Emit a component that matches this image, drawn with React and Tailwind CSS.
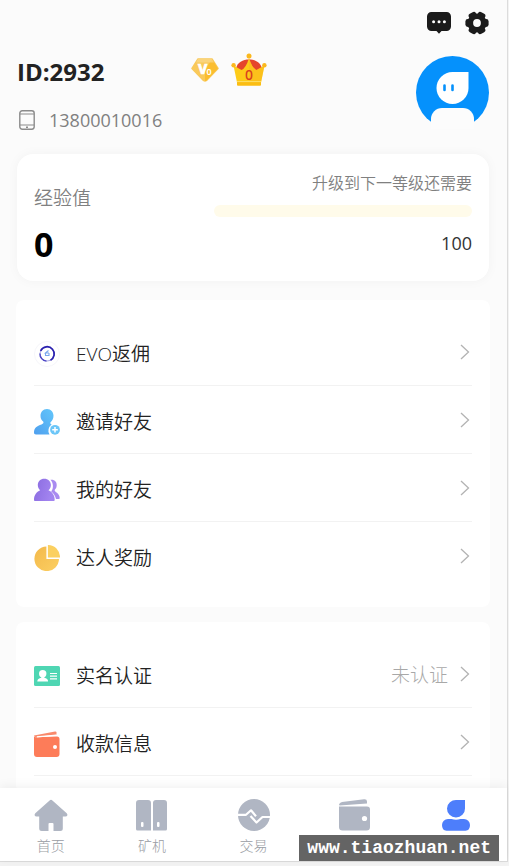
import clsx from "clsx";

function MessageIcon() {
  return (
    <svg viewBox="0 0 24 22" className="h-[22px] w-6" aria-hidden="true">
      <path
        fill="#1b1b1b"
        d="M4.5 0h15A4.4 4.4 0 0 1 24 4.400v10.200a4.400 4.400 0 0 1-4.500 4.400h-5L12 21.800 9.500 19h-5A4.400 4.400 0 0 1 0 14.600V4.400A4.400 4.400 0 0 1 4.500 0Z"
      />
      <circle cx="6.600" cy="9.800" r="1.500" fill="#fff" />
      <circle cx="12" cy="9.800" r="1.500" fill="#fff" />
      <circle cx="17.400" cy="9.800" r="1.500" fill="#fff" />
    </svg>
  );
}

function GearIcon() {
  return (
    <svg viewBox="0 0 24 24" className="size-6" aria-hidden="true">
      <g fill="#1b1b1b">
        <circle cx="12" cy="12" r="9.600" />
        {[30, 90, 150, 210, 270, 330].map((angle) => (
          <rect key={angle} x="8" y="0.400" width="8" height="7" rx="2.400" transform={`rotate(${angle} 12 12)`} />
        ))}
      </g>
      <circle cx="12" cy="12" r="3.900" fill="#fbfbfb" />
    </svg>
  );
}

function GemBadge() {
  return (
    <svg viewBox="0 0 28 24" className="h-6 w-7" role="img" aria-label="V0">
      <path d="M7 1h14l6 9.500L15.500 22.500q-1.500 1.200-3 0L1 10.500Z" fill="#f9c95a" stroke="#f9c95a" strokeWidth="1.500" strokeLinejoin="round" />
      <path d="M14 12 21 1l6 9.500L15.500 22.500q-.800.600-1.500.600Z" fill="#fbb612" opacity="0.600" />
      <path d="M7 1h14l2 3.500H5Z" fill="#fbd98a" opacity="0.700" />
      <text x="7" y="16" fill="#fff" stroke="#fff" strokeWidth="0.600" fontSize="14" fontWeight="800" fontFamily="Noto Sans, sans-serif">V</text>
      <text x="15.500" y="16.500" fill="#fff" fontSize="9" fontWeight="600" fontFamily="Noto Sans, sans-serif">0</text>
    </svg>
  );
}

function CrownBadge() {
  return (
    <svg viewBox="0 0 36 34" className="h-[34px] w-9" role="img" aria-label="0">
      <path d="M5 16C6 9 12 6.500 18 6.500S30 9 31 16l-4 6H9Z" fill="#e5462b" />
      <path d="M2.500 12.500 10.500 17Q15 15 18 5q3 10 7.500 12l8-4.500-3.500 17H6Z" fill="#fdcb18" />
      <path d="M18 5q3 10 7.500 12l8-4.500-3.500 17H18Z" fill="#fbb81d" opacity="0.500" />
      <path d="M6 28.500h24V32q0 .800-1 .800H7q-1 0-1-.800Z" fill="#fbbd12" />
      <path d="M6 28.600h24" stroke="#fde06a" />
      <circle cx="18" cy="3" r="2.500" fill="#fbb81d" />
      <circle cx="2.600" cy="12.300" r="2.200" fill="#fbb81d" />
      <circle cx="33.400" cy="12.300" r="2.200" fill="#fbb81d" />
      <text x="18" y="26.500" textAnchor="middle" fill="#d9401f" fontSize="14" fontWeight="500" fontFamily="Noto Sans, sans-serif">0</text>
    </svg>
  );
}

function Avatar() {
  return (
    <svg viewBox="0 0 73 73" className="size-[73px]" role="img" aria-label="头像">
      <clipPath id="avatar-circle">
        <circle cx="36.500" cy="36.500" r="36.500" />
      </clipPath>
      <g clipPath="url(#avatar-circle)">
        <rect width="73" height="73" fill="#0591fc" />
        <path d="M36.500 16H52.500V32A16 16 0 1 1 36.500 16Z" fill="#fff" />
      </g>
      <path d="M15 73V63a11 11 0 0 1 11-11H47a11 11 0 0 1 11 11V73Z" fill="#fcfcfc" />
      <path d="M28.500 29.500v4.500M36.500 29.500v4.500" stroke="#0591fc" strokeWidth="2.600" strokeLinecap="round" />
    </svg>
  );
}

function PhoneIcon() {
  return (
    <svg viewBox="0 0 16 20" className="h-5 w-4" fill="none" stroke="#8b8b8b" strokeWidth="1.400" aria-hidden="true">
      <rect x="0.800" y="0.800" width="14.400" height="18.400" rx="2.400" />
      <path d="M1 4h14M1 15h14" strokeWidth="1.100" />
      <path d="M7 17.200h2" />
    </svg>
  );
}

function ChevronIcon() {
  return (
    <svg viewBox="0 0 10 16" className="h-4 w-[10px]" fill="none" stroke="#b3b3b3" strokeWidth="1.300" aria-hidden="true">
      <path d="M1 1l7.500 7L1 15" />
    </svg>
  );
}

function CoinIcon() {
  return (
    <svg viewBox="0 0 26 26" className="size-[26px]" fill="none" aria-hidden="true">
      <circle cx="13" cy="13" r="12.500" stroke="#f6f6fa" />
      <circle cx="13" cy="13" r="7" stroke="#a9a8e6" strokeWidth="1.200" />
      <path d="M6.600 9.800A7.200 7.200 0 0 1 18.500 8.200a7.200 7.200 0 0 1-2 11" stroke="#2a20ae" strokeWidth="1.700" />
      <path d="M6 12.500a7.200 7.200 0 0 0 6.500 7.700" stroke="#4b45c4" strokeWidth="1.300" />
      <path d="M14.500 9.500 11.500 12h3.500M11.500 12v2.500h3.500V12" stroke="#79a8ee" strokeWidth="1.100" />
    </svg>
  );
}

function InviteIcon() {
  return (
    <svg viewBox="0 0 26 26" className="size-[26px]" aria-hidden="true">
      <defs>
        <linearGradient id="invite-fill" x1="0" y1="1" x2="1" y2="0">
          <stop offset="0" stopColor="#4f9fee" />
          <stop offset="1" stopColor="#62c6fb" />
        </linearGradient>
      </defs>
      <path
        fill="url(#invite-fill)"
        d="M13 0c4 0 6.500 3 6.500 6.800 0 2.700-1.200 5-3 6.500-.500 1.200.200 2 1.300 2.400A7 7 0 0 0 15.500 25.500H2c-1.400 0-2-.800-2-2 0-4.500 3-6.600 7.500-8 1.800-.600 2.400-1.700 1.700-2.900C7.600 11.600 6.500 9.500 6.500 6.800 6.500 3 9 0 13 0Z"
      />
      <circle cx="21" cy="20.800" r="6" fill="#fff" />
      <circle cx="21" cy="20.800" r="4.900" fill="#6bc6f8" />
      <path d="M21 18v5.600M18.200 20.800h5.600" stroke="#fff" strokeWidth="1.500" />
    </svg>
  );
}

function FriendsIcon() {
  return (
    <svg viewBox="0 0 26 24" className="h-6 w-[26px]" aria-hidden="true">
      <defs>
        <linearGradient id="friends-fill" x1="0" y1="0" x2="1" y2="0.300">
          <stop offset="0" stopColor="#8a6be0" />
          <stop offset="1" stopColor="#a385f0" />
        </linearGradient>
      </defs>
      <path
        fill="#a98bf0"
        d="M16.500 1.800c4.200-.500 6.500 2.200 6.200 5.800-.100 1.800-.700 3.200-1.900 4.200-.400 1 .200 1.700 1.100 2.300 2.400 1.500 3.800 3.500 3.800 6 0 .700-.400 1-1 1h-2.700c-.700-3.600-2.400-6-4.800-7.700 1.200-1.500 1.800-3.500 1.700-6-.200-2.200-1-4.200-2.400-5.600Z"
      />
      <path
        fill="url(#friends-fill)"
        d="M10.300.800c3.800 0 6.600 2.700 6.600 6.300 0 2.100-.900 4-2.400 5.200 3.800 1.500 6.200 5 6.200 9.500 0 .800-.400 1.200-1.200 1.200H1.200C.400 23 0 22.600 0 21.800c0-4.500 2.400-8 6.200-9.500C4.700 11.100 3.800 9.200 3.800 7.100 3.800 3.500 6.500.800 10.300.800Z"
      />
    </svg>
  );
}

function PieIcon() {
  return (
    <svg viewBox="0 0 26 26" className="size-[26px]" aria-hidden="true">
      <defs>
        <linearGradient id="pie-fill" x1="0" y1="0" x2="1" y2="1">
          <stop offset="0" stopColor="#f3b94a" />
          <stop offset="1" stopColor="#fccf63" />
        </linearGradient>
      </defs>
      <path fill="url(#pie-fill)" d="M12.400 1.500v12.600H25A12.300 12.300 0 1 1 12.400 1.500Z" />
      <path fill="#fbd060" d="M13.900 0A12 12 0 0 1 26 12.600H13.900Z" />
    </svg>
  );
}

function IdCardIcon() {
  return (
    <svg viewBox="0 0 26 20" className="h-5 w-[26px]" aria-hidden="true">
      <rect width="26" height="20" rx="1.500" fill="#4fd6b3" />
      <circle cx="8.700" cy="7.800" r="3.700" fill="#fff" />
      <path d="M3.300 15.500c0-2.300 1.700-3.200 4-3.800V10h3v1.700c2.300.600 3.800 1.500 3.800 3.800Z" fill="#fff" />
      <path d="M16 7.500h7M16 10.200h7M16 12.900h7" stroke="#fff" strokeWidth="1.200" />
    </svg>
  );
}

function PayIcon() {
  return (
    <svg viewBox="0 0 26 26" className="size-[26px]" aria-hidden="true">
      <path fill="#f98a6c" d="M0 4.600 21 .400q1.500-.200 1.500 1.200V3.800L1 6Z" />
      <path fill="#fd7c59" d="M0 4.600Q0 6.500 2 6.300L23 5.600q2.500 0 2.500 2.600V23q0 3-3 3H3q-3 0-3-3Z" />
      <path d="M3 5.800 22.500 4.200" stroke="#fff" strokeWidth="1.300" />
      <circle cx="21" cy="16" r="2" fill="#fff" />
    </svg>
  );
}

function HomeTabIcon() {
  return (
    <svg viewBox="0 0 34 32" className="h-8 w-[34px]" aria-hidden="true">
      <path
        fill="currentColor"
        d="M15.600 1.400q1.400-1.200 2.800 0L32.700 14.300q1 1 .600 2.200-.400 1-1.800 1h-2.700v12q0 2.500-2.500 2.500h-6.800V25q0-1-1-1h-3q-1 0-1 1v7H7.700q-2.500 0-2.500-2.500v-12H2.500q-1.400 0-1.800-1-.400-1.200.600-2.200Z"
      />
    </svg>
  );
}

function MinerTabIcon() {
  return (
    <svg viewBox="0 0 34 32" className="h-8 w-[34px]" aria-hidden="true">
      <path fill="currentColor" d="M4 1h9q3 0 3 3v27.500H2.500Q1 31.500 1 30V4q0-3 3-3ZM21 1h8q3 0 3 3v26q0 1.500-1.500 1.500H18V4q0-3 3-3Z" />
      <rect x="6" y="23" width="2.500" height="5" rx="1" fill="#fff" />
      <rect x="22" y="23" width="2.500" height="5" rx="1" fill="#fff" />
    </svg>
  );
}

function TradeTabIcon() {
  return (
    <svg viewBox="0 0 34 32" className="h-8 w-[34px]" aria-hidden="true">
      <circle cx="17" cy="16" r="16" fill="currentColor" />
      <path d="M0 15.800h9L14 11.300l5 6" fill="none" stroke="#fff" strokeWidth="2.200" strokeLinejoin="round" />
      <path d="M13.500 17 19.500 23.500 25.500 18H34" fill="none" stroke="#fff" strokeWidth="2.200" strokeLinejoin="round" />
    </svg>
  );
}

function WalletTabIcon() {
  return (
    <svg viewBox="0 0 34 32" className="h-8 w-[34px]" aria-hidden="true">
      <path fill="currentColor" d="M1 5.500Q1.500 3.500 4 3L26 .300Q29 0 29 2.500V4.600L1.500 6.500Z" />
      <path fill="currentColor" d="M1 7.500H29q3 0 3 3V28q0 3.500-3.500 3.500h-24Q1 31.500 1 28Z" />
      <circle cx="26.500" cy="19.500" r="2.600" fill="#fff" />
    </svg>
  );
}

function MineTabIcon() {
  return (
    <svg viewBox="0 0 34 32" className="h-8 w-[34px]" aria-hidden="true">
      <path fill="currentColor" d="M17.500 1H26V9.500A9 8.700 0 1 1 17.500 1Z" />
      <path fill="currentColor" d="M9 20h3.500q4.500 1.500 9 0H25a6 6 0 0 1 6 6q0 5.700-4.500 5.700h-19Q3 31.700 3 26a6 6 0 0 1 6-6Z" />
    </svg>
  );
}

const rewardItems = [
  { label: "EVO返佣", Icon: CoinIcon },
  { label: "邀请好友", Icon: InviteIcon },
  { label: "我的好友", Icon: FriendsIcon },
  { label: "达人奖励", Icon: PieIcon },
];

const accountItems = [
  { label: "实名认证", Icon: IdCardIcon, status: "未认证" },
  { label: "收款信息", Icon: PayIcon },
];

const tabs = [
  { name: "首页", Icon: HomeTabIcon, label: "首页" },
  { name: "矿机", Icon: MinerTabIcon, label: "矿机" },
  { name: "交易", Icon: TradeTabIcon, label: "交易" },
  { name: "钱包", Icon: WalletTabIcon },
  { name: "我的", Icon: MineTabIcon, active: true },
];

function MenuRow({ label, Icon, status, divider }) {
  return (
    <a href="#" className={clsx("flex h-[68px] items-center border-b", divider ? "border-[#f2f2f2]" : "border-transparent")}>
      <span className="flex w-[26px] justify-center pt-1">
        <Icon />
      </span>
      <span className="ml-4 flex-1 pt-[6px] text-[19px] font-[350] text-[#222]">{label}</span>
      {status && <span className="mr-3 pt-1 text-[19px] text-[#a8a8a8]">{status}</span>}
      <span className="mr-[2px] pt-px">
        <ChevronIcon />
      </span>
    </a>
  );
}

// The last row of a complete group has no line under it.
function MenuCard({ items, openEnded }) {
  return (
    <section className="rounded-lg bg-white px-[18px] pt-[18px] pb-[17px]">
      {items.map((item, index) => (
        <MenuRow key={item.label} {...item} divider={openEnded || index < items.length - 1} />
      ))}
    </section>
  );
}

function App() {
  return (
    <div className="relative h-screen bg-[#f3f3f3] pr-px pb-1 font-['Open_Sans','Noto_Sans_CJK_SC',sans-serif] font-light">
      <div className="flex h-full flex-col border-r border-b border-[#dcdcdc] bg-[#fbfbfb]">
        <main className="min-h-0 flex-1 overflow-hidden pr-px">
          <header className="px-[17px] pt-[11px]">
            <div className="flex justify-end gap-[14px]">
              <button type="button" aria-label="消息">
                <MessageIcon />
              </button>
              <button type="button" aria-label="设置">
                <GearIcon />
              </button>
            </div>
            <div className="mt-[21px] flex items-start justify-between">
              <div>
                <div className="flex h-8 items-center">
                  <h1 className="w-[174px] text-2xl font-bold text-[#222]">ID:2932</h1>
                  <div className="flex items-center gap-3 pb-1">
                    <GemBadge />
                    <CrownBadge />
                  </div>
                </div>
                <p className="mt-[18px] flex h-7 items-center gap-[14px] pl-[2px] text-lg font-normal text-[#808080]">
                  <PhoneIcon />
                  13800010016
                </p>
              </div>
              <Avatar />
            </div>
          </header>

          <section className="mx-[17px] mt-5 flex justify-between rounded-2xl bg-white px-[17px] pt-[17px] pb-[19px] shadow-[0_0_12px_rgba(0,0,0,0.04)]">
            <div>
              <p className="mt-[13px] text-[19px] leading-7 font-[350] text-[#808080]">经验值</p>
              <p className="mt-[14px] text-[34px] leading-9 font-bold text-black">0</p>
            </div>
            <div className="w-[59%] text-right">
              <p className="text-base font-[350] text-[#808080]">升级到下一等级还需要</p>
              <div className="mt-[10px] h-3 rounded-full bg-[#fffbea]" />
              <p className="mt-3 text-lg leading-7 font-normal text-[#333]">100</p>
            </div>
          </section>

          <div className="mx-4 mt-[19px] space-y-[15px]">
            <MenuCard items={rewardItems} />
            <MenuCard items={accountItems} openEnded />
          </div>
        </main>

        <nav className="relative flex h-[73px] shrink-0 bg-white pt-[11px] shadow-[0_-2px_10px_rgba(0,0,0,0.06)]">
          {tabs.map(({ name, Icon, label, active }) => (
            <a
              key={name}
              href="#"
              aria-label={name}
              aria-current={active ? "page" : undefined}
              className={clsx("flex flex-1 flex-col items-center", active ? "text-[#4d7efb]" : "text-[#b0b6c3]")}
            >
              <Icon />
              {label && <span className="mt-[5px] text-sm text-[#999ca3]">{label}</span>}
            </a>
          ))}
        </nav>
      </div>

      <div className="absolute right-[10px] bottom-[5px] bg-[#646464] px-2 font-['Liberation_Mono',monospace] text-lg leading-[26px] font-bold text-white">
        www.tiaozhuan.net
      </div>
    </div>
  );
}

export default App;
